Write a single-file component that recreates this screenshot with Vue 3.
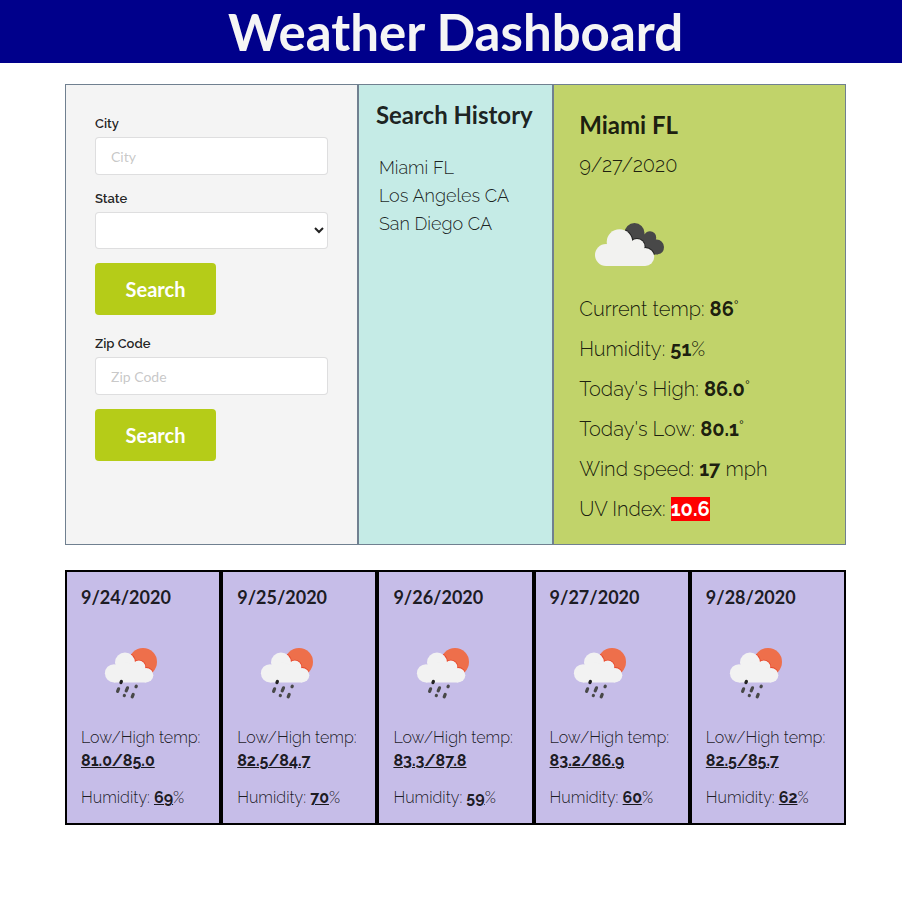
<script setup>
import { ref } from 'vue'

const city = ref('')
const state = ref('')
const zip = ref('')

const states = ['', 'CA', 'FL', 'NY', 'TX', 'WA']
const history = ['Miami FL', 'Los Angeles CA', 'San Diego CA']

const readings = [
  { label: 'Current temp:', value: '86', unit: '˚' },
  { label: 'Humidity:', value: '51', unit: '%' },
  { label: "Today's High:", value: '86.0', unit: '˚' },
  { label: "Today's Low:", value: '80.1', unit: '˚' },
  { label: 'Wind speed:', value: '17', unit: ' mph' },
]

const forecast = [
  { date: '9/24/2020', temps: '81.0/85.0', humidity: '69' },
  { date: '9/25/2020', temps: '82.5/84.7', humidity: '70' },
  { date: '9/26/2020', temps: '83.3/87.8', humidity: '59' },
  { date: '9/27/2020', temps: '83.2/86.9', humidity: '60' },
  { date: '9/28/2020', temps: '82.5/85.7', humidity: '62' },
]
</script>

<template>
  <div class="page">
    <header class="banner">
      <h1>Weather Dashboard</h1>
    </header>

    <main class="content">
      <div class="panels">
        <section class="panel search">
          <form class="city-form" @submit.prevent>
            <label for="city">City</label>
            <input id="city" v-model="city" type="text" placeholder="City" />
            <label for="state">State</label>
            <select id="state" v-model="state">
              <option v-for="s in states" :key="s" :value="s">{{ s }}</option>
            </select>
            <button type="submit">Search</button>
          </form>
          <form @submit.prevent>
            <label for="zip">Zip Code</label>
            <input id="zip" v-model="zip" type="text" placeholder="Zip Code" />
            <button type="submit">Search</button>
          </form>
        </section>

        <section class="panel history">
          <h2>Search History</h2>
          <ul>
            <li v-for="place in history" :key="place">{{ place }}</li>
          </ul>
        </section>

        <section class="panel today">
          <h2>Miami FL</h2>
          <p>9/27/2020</p>
          <svg class="weather-icon" viewBox="-11 -21 100 100" aria-hidden="true">
            <clipPath id="back-cloud">
              <circle cx="44.5" cy="18" r="10" />
              <circle cx="60" cy="22.5" r="6.2" />
              <circle cx="66.5" cy="32" r="7.5" />
              <path d="M44 10L54 19L64 24L68 39.5L62 39.5L44 34Z" />
            </clipPath>
            <g clip-path="url(#back-cloud)">
              <path fill="#484848" d="M30 5H80V45H30Z" />
              <g fill="#222">
                <circle cx="29.5" cy="27" r="13.8" />
                <circle cx="47" cy="31.5" r="8.6" />
                <circle cx="55.2" cy="42" r="10" />
              </g>
            </g>
            <g fill="#f2f2f0">
              <circle cx="16" cy="40" r="11" />
              <circle cx="29.5" cy="27" r="12.8" />
              <circle cx="47" cy="31.5" r="7.6" />
              <circle cx="55.2" cy="42" r="9" />
              <path d="M16 51V36L29 27L47 30L55 36V51Z" />
            </g>
          </svg>
          <div class="readings">
            <p v-for="r in readings" :key="r.label">{{ r.label }} <b>{{ r.value }}</b>{{ r.unit }}</p>
            <p>UV Index: <b class="uv">10.6</b></p>
          </div>
        </section>
      </div>

      <section class="forecast">
        <article v-for="(day, i) in forecast" :key="day.date" class="day">
          <h3>{{ day.date }}</h3>
          <svg class="weather-icon" viewBox="-19 -17 100 100" aria-hidden="true">
            <clipPath :id="`sun-${i}`">
              <circle cx="43" cy="22" r="14" />
            </clipPath>
            <g :clip-path="`url(#sun-${i})`">
              <path fill="#ee6f4b" d="M28 7H58V37H28Z" />
              <g fill="#e8482c">
                <circle cx="25" cy="22.5" r="10.8" />
                <circle cx="38.8" cy="27" r="7.3" />
                <circle cx="46" cy="35.2" r="8.1" />
              </g>
            </g>
            <g fill="#f2f2f2">
              <circle cx="14" cy="33.3" r="9.1" />
              <circle cx="25" cy="22.5" r="10" />
              <circle cx="38.8" cy="27" r="6.5" />
              <circle cx="46" cy="35.2" r="7.3" />
              <path d="M14 42.4V30L25 22L39 26L46 30V42.4Z" />
            </g>
            <g fill="none" stroke="#484848" stroke-width="3.2" stroke-linecap="round">
              <path stroke="#222" d="M21.4 41.5L20.9 42.6" />
              <path d="M18.6 48.8L17.6 51.4M27.5 47.8L26.2 50.8M36.3 46.1L36 46.7M24.4 55.4L24.3 55.6M33.2 54.4L32.2 56.8" />
            </g>
          </svg>
          <p>Low/High temp: <b>{{ day.temps }}</b></p>
          <p>Humidity: <b>{{ day.humidity }}</b>%</p>
        </article>
      </section>
    </main>
  </div>
</template>

<style>
body {
  margin: 0;
  background: #fff;
}
</style>

<style scoped>
.page {
  color: rgba(0, 0, 0, 0.87);
  font-family: Raleway, "Open Sans", sans-serif;
  font-weight: 300;
  font-variant-numeric: oldstyle-nums;
}

.page *,
.page *::before {
  box-sizing: border-box;
}

.banner {
  padding: 0 56px 0 65px;
  background: darkblue;
  color: whitesmoke;
  text-align: center;
}

h1,
h2,
h3,
p,
ul {
  margin: 0;
}

h1,
h2,
h3 {
  font-family: Lato, sans-serif;
  font-variant-numeric: lining-nums;
  font-weight: 700;
}

h1 {
  font-size: 51px;
  line-height: 63px;
}

h2 {
  font-size: 24px;
  line-height: 30px;
}

h3 {
  font-size: 18px;
  line-height: 24px;
}

.content {
  padding: 21px 56px 24px 65px;
}

.panels {
  display: grid;
  grid-template-columns: 3fr 2fr 3fr;
}

.panel {
  border: 1px solid slategray;
}

.search {
  padding: 29px;
  background: #f4f4f4;
}

form {
  display: flex;
  flex-direction: column;
  align-items: flex-start;
}

.city-form {
  margin-bottom: 19px;
}

label {
  margin-bottom: 4px;
  font-size: 13px;
  font-weight: 600;
  line-height: 19px;
}

input,
select {
  width: 100%;
  height: 38px;
  margin: 0 0 14px;
  border: 1px solid rgba(34, 36, 38, 0.15);
  border-radius: 4px;
  background: #fff;
  color: rgba(0, 0, 0, 0.87);
  font-family: Lato, sans-serif;
  font-size: 14px;
}

input {
  padding: 0 15px;
}

select {
  height: 37px;
}

input::placeholder {
  color: rgba(191, 191, 191, 0.87);
}

button {
  min-width: 121px;
  padding: 14px 30px;
  border: 0;
  border-radius: 4px;
  background: #b5cc18;
  color: #fff;
  font-family: Lato, sans-serif;
  font-size: 20px;
  font-weight: 700;
  line-height: 24px;
}

.history {
  padding: 15px 17px;
  background: #c5ebe6;
}

.history ul {
  padding: 24px 0 0 3px;
  list-style: none;
  font-size: 18px;
  line-height: 28px;
}

.today {
  padding: 25px 25px 20px;
  background: #c1d36a;
  font-size: 20px;
}

.today p {
  margin-top: 10px;
  line-height: 30px;
}

.weather-icon {
  display: block;
  width: 100px;
  height: 100px;
}

.today .weather-icon {
  margin-top: 14px;
}

.readings {
  display: grid;
  gap: 10px;
}

.readings p {
  margin: 0;
}

b {
  font-weight: 700;
}

.uv {
  background: red;
  color: #fff;
}

.forecast {
  display: grid;
  grid-template-columns: repeat(5, 1fr);
  margin-top: 25px;
}

.day {
  padding: 13px 14px 14px;
  border: 2px solid #000;
  background: #c6bde8;
  font-size: 16px;
  line-height: 23px;
}

.day .weather-icon {
  margin: 14px 0 3px;
}

.day p + p {
  margin-top: 14px;
}

.day b {
  text-decoration: underline;
}
</style>
